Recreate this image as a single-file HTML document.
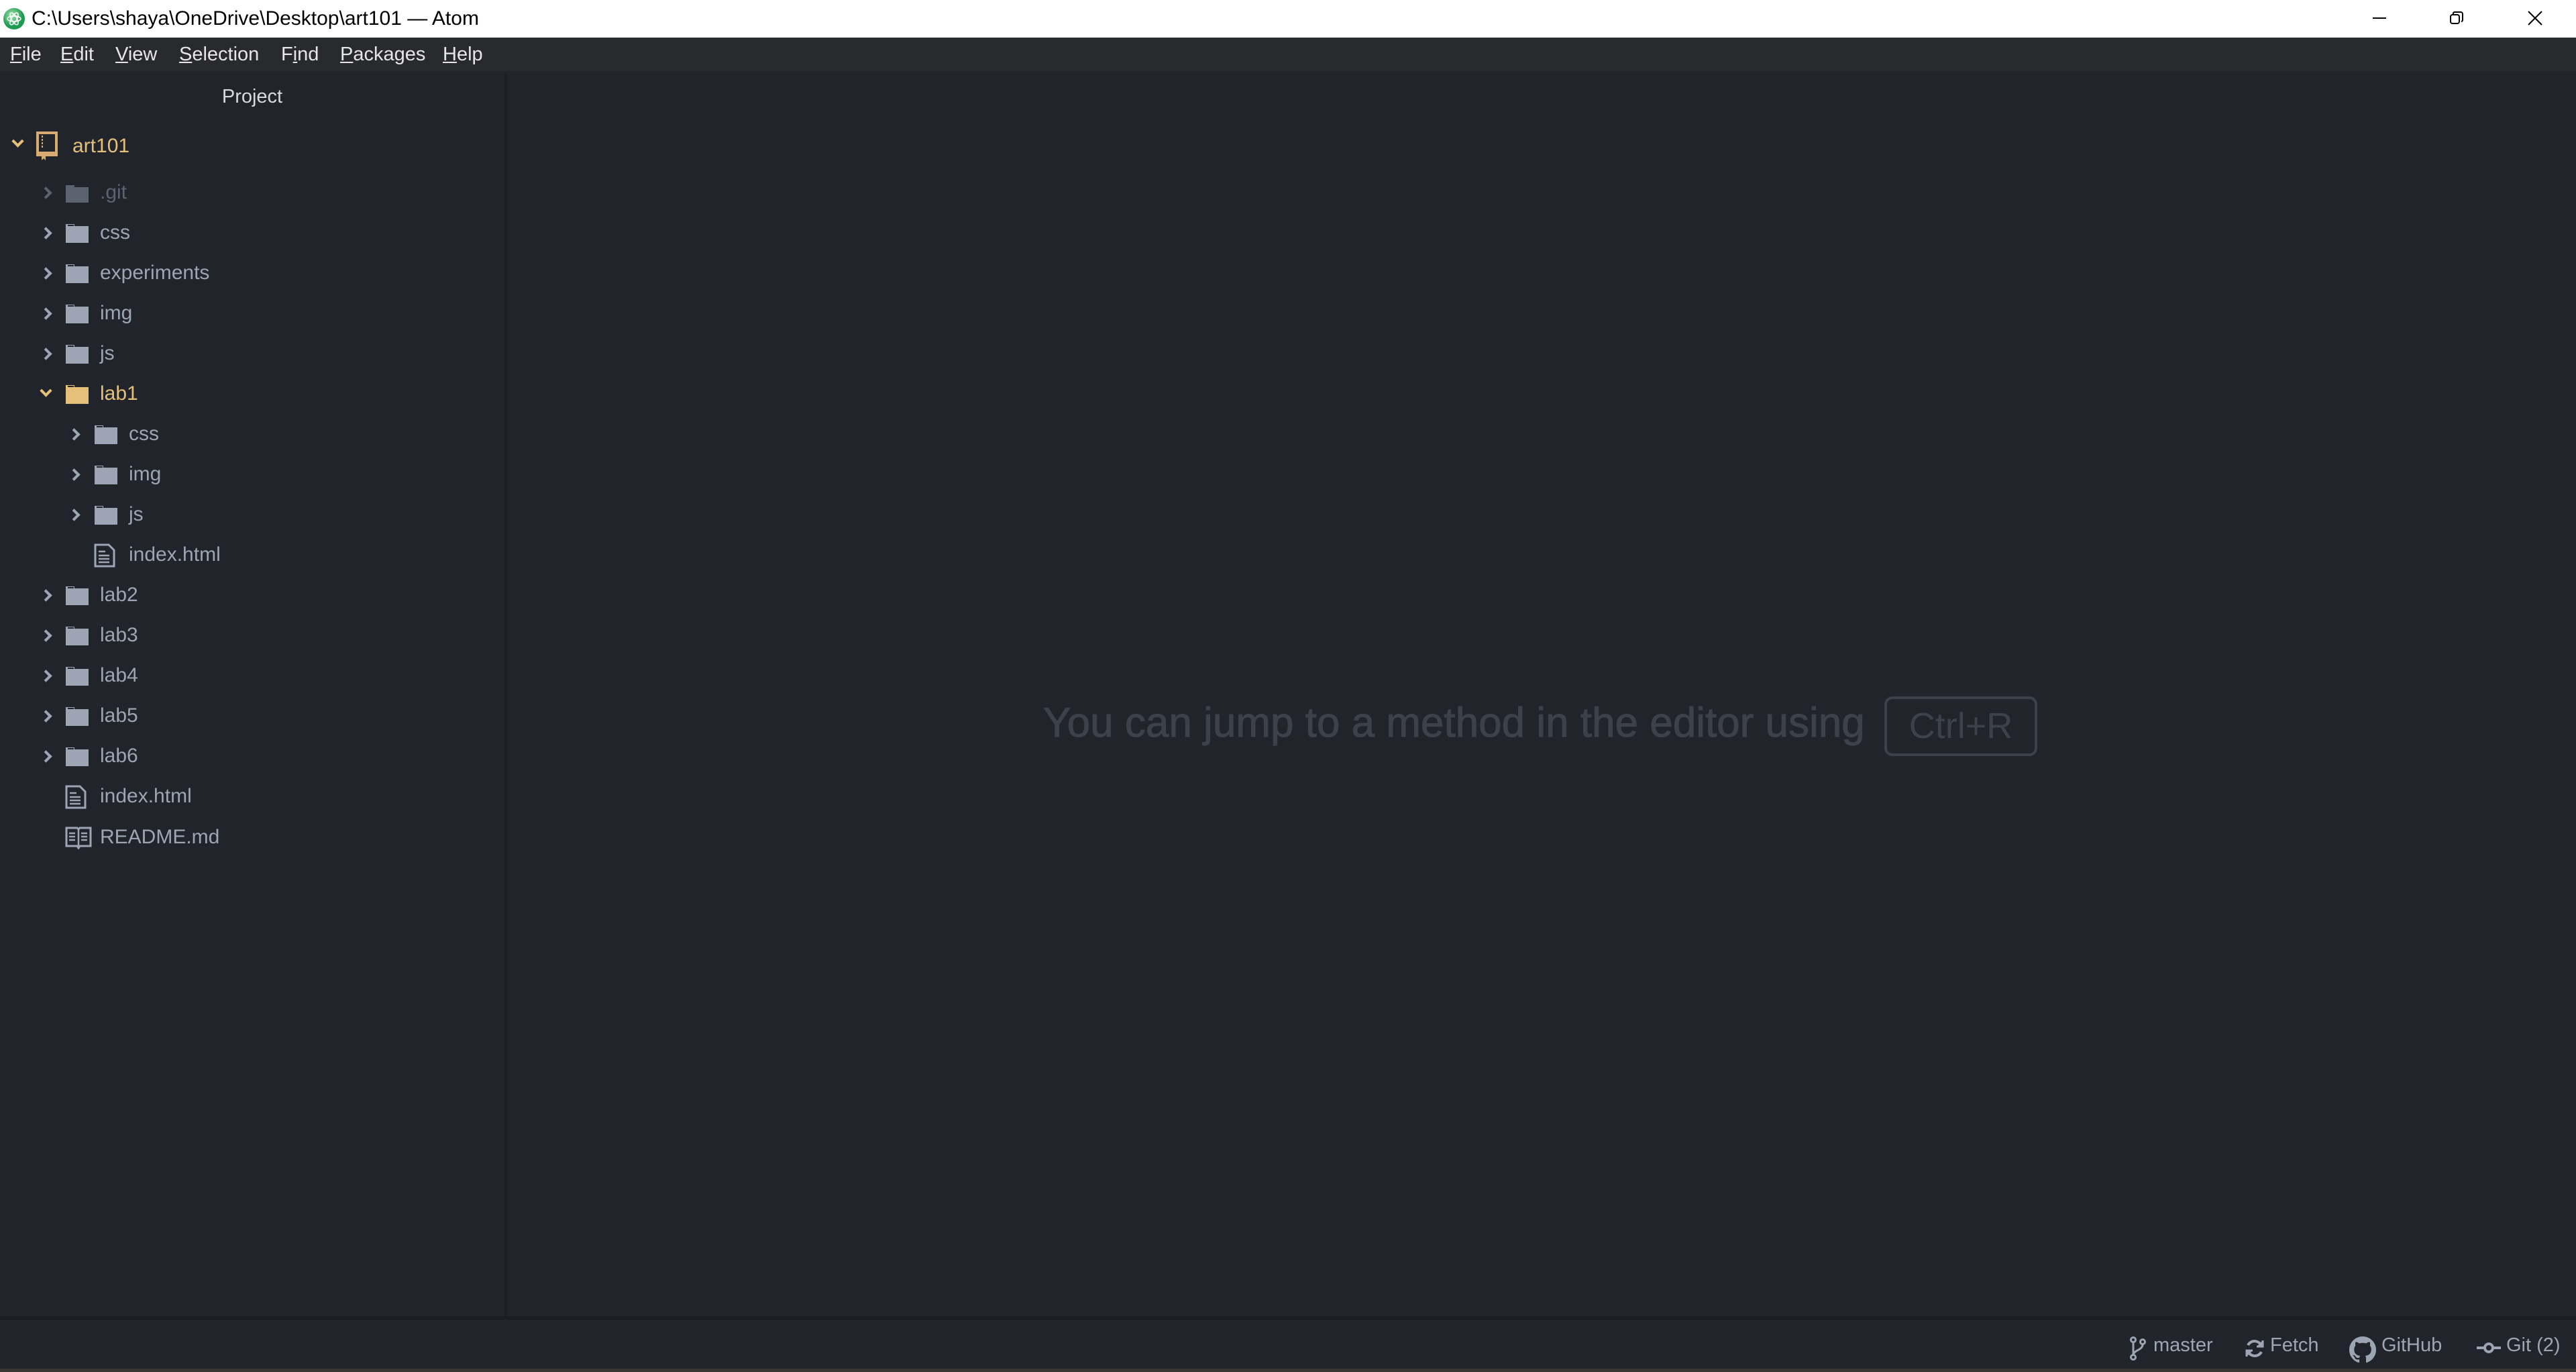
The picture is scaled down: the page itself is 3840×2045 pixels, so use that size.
<!DOCTYPE html>
<html><head><meta charset="utf-8"><style>
*{margin:0;padding:0;box-sizing:border-box}
body{width:3840px;height:2045px;overflow:hidden;background:#21252b;font-family:"Liberation Sans",sans-serif;position:relative}
.abs{position:absolute}
#title{left:0;top:0;width:3840px;height:56px;background:#fff;color:#000;font-size:30px;line-height:56px}
#menu{left:0;top:56px;width:3840px;height:50px;background:#292a2e;color:#e6e6e6;font-size:29px;line-height:50px}
#menu span{position:absolute;top:0}
#tree{left:0;top:106px;width:756px;height:1856px;background:#21252b;border-right:4px solid #1d2026}
#editor{left:756px;top:106px;width:3084px;height:1856px;background:#21252b}
.row{position:absolute;font-size:30px;color:#9da5b4;line-height:40px;white-space:nowrap}
.chev{position:absolute;width:13px;height:13px;border-right:4px solid #9da5b4;border-bottom:4px solid #9da5b4}
.fold{position:absolute;width:36px;height:31px}
#status{left:0;top:1962px;width:3840px;height:78px;background:#21252b;border-top:5px solid #1b1d22;color:#9da5b4;font-size:29px}
#status .it{position:absolute;top:20px;line-height:36px}
</style></head><body>
<div id="title" class="abs">
<svg class="abs" style="left:4px;top:11px" width="34" height="34" viewBox="0 0 34 34"><defs><radialGradient id="g" cx="40%" cy="35%"><stop offset="0" stop-color="#a8e6b0"/><stop offset="1" stop-color="#1f9a52"/></radialGradient></defs><circle cx="17" cy="17" r="16" fill="url(#g)"/><g fill="none" stroke="#fff" stroke-width="1.5"><ellipse cx="17" cy="17" rx="10" ry="4"/><ellipse cx="17" cy="17" rx="10" ry="4" transform="rotate(60 17 17)"/><ellipse cx="17" cy="17" rx="10" ry="4" transform="rotate(-60 17 17)"/></g></svg>
<span class="abs" style="left:47px;top:0">C:\Users\shaya\OneDrive\Desktop\art101 — Atom</span>
<div class="abs" style="left:3537px;top:26px;width:20px;height:2px;background:#000"></div>
<svg class="abs" style="left:3651px;top:16px" width="22" height="22" viewBox="0 0 22 22" fill="none" stroke="#000" stroke-width="2"><rect x="2" y="6" width="13" height="13" rx="3"/><path d="M6 5 V4 a2 2 0 0 1 2-2 h9 a3 3 0 0 1 3 3 v9 a2 2 0 0 1-2 2"/></svg>
<svg class="abs" style="left:3768px;top:16px" width="22" height="22" viewBox="0 0 22 22" stroke="#000" stroke-width="2"><path d="M1 1L21 21M21 1L1 21"/></svg>
</div>
<div id="menu" class="abs">
<span style="left:15px"><u>F</u>ile</span><span style="left:90px"><u>E</u>dit</span><span style="left:172px"><u>V</u>iew</span><span style="left:267px"><u>S</u>election</span><span style="left:419px">F<u>i</u>nd</span><span style="left:507px"><u>P</u>ackages</span><span style="left:660px"><u>H</u>elp</span>
</div>
<div id="tree" class="abs"></div>
<div id="editor" class="abs"></div>
<div class="abs" style="left:0;top:124px;width:752px;text-align:center;color:#d7dae0;font-size:29px;line-height:40px">Project</div>

<div class="chev" style="left:20px;top:204px;transform:rotate(45deg);border-color:#e5c07b"></div>
<svg class="abs" style="left:54px;top:196px" width="32" height="44" viewBox="0 0 32 44"><rect x="2" y="2" width="28" height="33" fill="none" stroke="#d8ab72" stroke-width="4"/><rect x="2" y="30" width="28" height="5" fill="#d8ab72"/><path d="M9 6v20" stroke="#d8ab72" stroke-width="2" stroke-dasharray="3 2"/><path d="M8 35h6v8l-3-3-3 3z" fill="#d8ab72"/></svg>
<div class="row" style="left:108px;top:198px;color:#e5c07b">art101</div>

<div class="chev" style="left:62px;top:281px;transform:rotate(-45deg);border-color:#5c6370"></div>
<div class="fold" style="left:97px;top:272px"><svg width="36" height="31"><path d="M1 4 h13 v3 h21 v23 h-34z" fill="#5c6370"/></svg></div>
<div class="row" style="left:149px;top:267px;color:#5c6370">.git</div>

<div class="chev" style="left:62px;top:341px;transform:rotate(-45deg)"></div>
<div class="fold" style="left:97px;top:332px"><svg width="36" height="31"><path d="M1 2 h13 v3 h21 v25 h-34z" fill="#9da5b4"/><path d="M4 4h9" stroke="#21252b" stroke-width="2"/></svg></div>
<div class="row" style="left:149px;top:327px">css</div>

<div class="chev" style="left:62px;top:401px;transform:rotate(-45deg)"></div>
<div class="fold" style="left:97px;top:392px"><svg width="36" height="31"><path d="M1 2 h13 v3 h21 v25 h-34z" fill="#9da5b4"/><path d="M4 4h9" stroke="#21252b" stroke-width="2"/></svg></div>
<div class="row" style="left:149px;top:387px">experiments</div>

<div class="chev" style="left:62px;top:461px;transform:rotate(-45deg)"></div>
<div class="fold" style="left:97px;top:452px"><svg width="36" height="31"><path d="M1 2 h13 v3 h21 v25 h-34z" fill="#9da5b4"/><path d="M4 4h9" stroke="#21252b" stroke-width="2"/></svg></div>
<div class="row" style="left:149px;top:447px">img</div>

<div class="chev" style="left:62px;top:521px;transform:rotate(-45deg)"></div>
<div class="fold" style="left:97px;top:512px"><svg width="36" height="31"><path d="M1 2 h13 v3 h21 v25 h-34z" fill="#9da5b4"/><path d="M4 4h9" stroke="#21252b" stroke-width="2"/></svg></div>
<div class="row" style="left:149px;top:507px">js</div>

<div class="chev" style="left:62px;top:576px;transform:rotate(45deg);border-color:#e5c07b"></div>
<div class="fold" style="left:97px;top:572px"><svg width="36" height="31"><path d="M1 2 h13 v3 h21 v25 h-34z" fill="#e5c07b"/><path d="M4 4h9" stroke="#21252b" stroke-width="2"/></svg></div>
<div class="row" style="left:149px;top:567px;color:#e5c07b">lab1</div>

<div class="chev" style="left:104px;top:641px;transform:rotate(-45deg)"></div>
<div class="fold" style="left:140px;top:632px"><svg width="36" height="31"><path d="M1 2 h13 v3 h21 v25 h-34z" fill="#9da5b4"/><path d="M4 4h9" stroke="#21252b" stroke-width="2"/></svg></div>
<div class="row" style="left:192px;top:627px">css</div>

<div class="chev" style="left:104px;top:701px;transform:rotate(-45deg)"></div>
<div class="fold" style="left:140px;top:692px"><svg width="36" height="31"><path d="M1 2 h13 v3 h21 v25 h-34z" fill="#9da5b4"/><path d="M4 4h9" stroke="#21252b" stroke-width="2"/></svg></div>
<div class="row" style="left:192px;top:687px">img</div>

<div class="chev" style="left:104px;top:761px;transform:rotate(-45deg)"></div>
<div class="fold" style="left:140px;top:752px"><svg width="36" height="31"><path d="M1 2 h13 v3 h21 v25 h-34z" fill="#9da5b4"/><path d="M4 4h9" stroke="#21252b" stroke-width="2"/></svg></div>
<div class="row" style="left:192px;top:747px">js</div>

<svg class="abs" style="left:140px;top:810px" width="32" height="36" viewBox="0 0 32 36" fill="none" stroke="#9da5b4" stroke-width="3"><path d="M2 2h20l8 8v24h-28z"/><path d="M7 12h10M7 18h16M7 23h16M7 28h16" stroke-width="2.5"/></svg>
<div class="row" style="left:192px;top:807px">index.html</div>

<div class="chev" style="left:62px;top:881px;transform:rotate(-45deg)"></div>
<div class="fold" style="left:97px;top:872px"><svg width="36" height="31"><path d="M1 2 h13 v3 h21 v25 h-34z" fill="#9da5b4"/><path d="M4 4h9" stroke="#21252b" stroke-width="2"/></svg></div>
<div class="row" style="left:149px;top:867px">lab2</div>

<div class="chev" style="left:62px;top:941px;transform:rotate(-45deg)"></div>
<div class="fold" style="left:97px;top:932px"><svg width="36" height="31"><path d="M1 2 h13 v3 h21 v25 h-34z" fill="#9da5b4"/><path d="M4 4h9" stroke="#21252b" stroke-width="2"/></svg></div>
<div class="row" style="left:149px;top:927px">lab3</div>

<div class="chev" style="left:62px;top:1001px;transform:rotate(-45deg)"></div>
<div class="fold" style="left:97px;top:992px"><svg width="36" height="31"><path d="M1 2 h13 v3 h21 v25 h-34z" fill="#9da5b4"/><path d="M4 4h9" stroke="#21252b" stroke-width="2"/></svg></div>
<div class="row" style="left:149px;top:987px">lab4</div>

<div class="chev" style="left:62px;top:1061px;transform:rotate(-45deg)"></div>
<div class="fold" style="left:97px;top:1052px"><svg width="36" height="31"><path d="M1 2 h13 v3 h21 v25 h-34z" fill="#9da5b4"/><path d="M4 4h9" stroke="#21252b" stroke-width="2"/></svg></div>
<div class="row" style="left:149px;top:1047px">lab5</div>

<div class="chev" style="left:62px;top:1121px;transform:rotate(-45deg)"></div>
<div class="fold" style="left:97px;top:1112px"><svg width="36" height="31"><path d="M1 2 h13 v3 h21 v25 h-34z" fill="#9da5b4"/><path d="M4 4h9" stroke="#21252b" stroke-width="2"/></svg></div>
<div class="row" style="left:149px;top:1107px">lab6</div>

<svg class="abs" style="left:97px;top:1170px" width="32" height="36" viewBox="0 0 32 36" fill="none" stroke="#9da5b4" stroke-width="3"><path d="M2 2h20l8 8v24h-28z"/><path d="M7 12h10M7 18h16M7 23h16M7 28h16" stroke-width="2.5"/></svg>
<div class="row" style="left:149px;top:1167px">index.html</div>

<svg class="abs" style="left:97px;top:1232px" width="40" height="34" viewBox="0 0 40 34" fill="none" stroke="#9da5b4" stroke-width="3"><path d="M2 2h16l2 2 2-2h16v27h-16l-2 3-2-3h-16z"/><path d="M20 4v25M6 10h9M6 15h9M6 20h9M24 10h9M24 15h9M24 20h9" stroke-width="2.5"/></svg>
<div class="row" style="left:149px;top:1228px">README.md</div>

<div class="abs" style="left:1555px;top:1040px;font-size:62px;line-height:76px;color:#3c414a;white-space:nowrap;-webkit-text-stroke:1px #3c414a">You can jump to a method in the editor using</div>
<div class="abs" style="left:2809px;top:1038px;width:228px;height:89px;border:4px solid #3c414a;border-radius:12px;color:#3c414a;font-size:54px;line-height:80px;text-align:center">Ctrl+R</div>

<div id="status" class="abs">
<svg class="abs" style="left:3174px;top:25px" width="26" height="36" viewBox="0 0 26 36" fill="none" stroke="#9da5b4" stroke-width="3"><circle cx="6" cy="5" r="3.5"/><circle cx="6" cy="31" r="3.5"/><circle cx="20" cy="8" r="3.5"/><path d="M6 9v18M20 12c0 8-12 8-14 15"/></svg>
<div class="it" style="left:3210px">master</div>
<svg class="abs" style="left:3346px;top:28px" width="30" height="30" viewBox="0 0 30 30" fill="none" stroke="#9da5b4" stroke-width="4"><path d="M25 11A11 11 0 0 0 5 10M5 19a11 11 0 0 0 20 1"/><path d="M27 3v9h-9M3 27v-9h9" stroke-width="3" fill="#9da5b4"/></svg>
<div class="it" style="left:3384px">Fetch</div>
<svg class="abs" style="left:3502px;top:25px" width="40" height="40" viewBox="0 0 16 16"><path fill="#9da5b4" d="M8 0C3.58 0 0 3.58 0 8c0 3.540 2.29 6.53 5.47 7.59.4.07.55-.17.55-.38 0-.19-.01-.82-.01-1.49-2.01.37-2.530-.49-2.69-.94-.09-.23-.48-.94-.82-1.13-.28-.15-.68-.52-.01-.53.63-.01 1.08.58 1.23.82.72 1.21 1.87.87 2.33.66.07-.52.28-.87.51-1.070-1.78-.2-3.64-.89-3.64-3.95 0-.87.31-1.59.82-2.15-.08-.2-.36-1.02.08-2.12 0 0 .67-.21 2.2.82.64-.18 1.32-.27 2-.27.68 0 1.36.09 2 .27 1.53-1.04 2.2-.82 2.2-.82.44 1.1.16 1.92.08 2.12.51.56.82 1.27.82 2.15 0 3.07-1.87 3.75-3.65 3.95.29.25.54.73.54 1.48 0 1.07-.01 1.93-.01 2.2 0 .21.15.46.55.38A8.013 8.013 0 0016 8c0-4.42-3.58-8-8-8z"/></svg>
<div class="it" style="left:3550px">GitHub</div>
<svg class="abs" style="left:3692px;top:32px" width="36" height="20" viewBox="0 0 36 20" fill="none" stroke="#9da5b4" stroke-width="4"><circle cx="18" cy="10" r="6"/><path d="M0 10h12M24 10h12"/></svg>
<div class="it" style="left:3736px">Git (2)</div>
</div>
<div class="abs" style="left:0;top:2040px;width:3840px;height:5px;background:#3a3633"></div>
</body></html>
